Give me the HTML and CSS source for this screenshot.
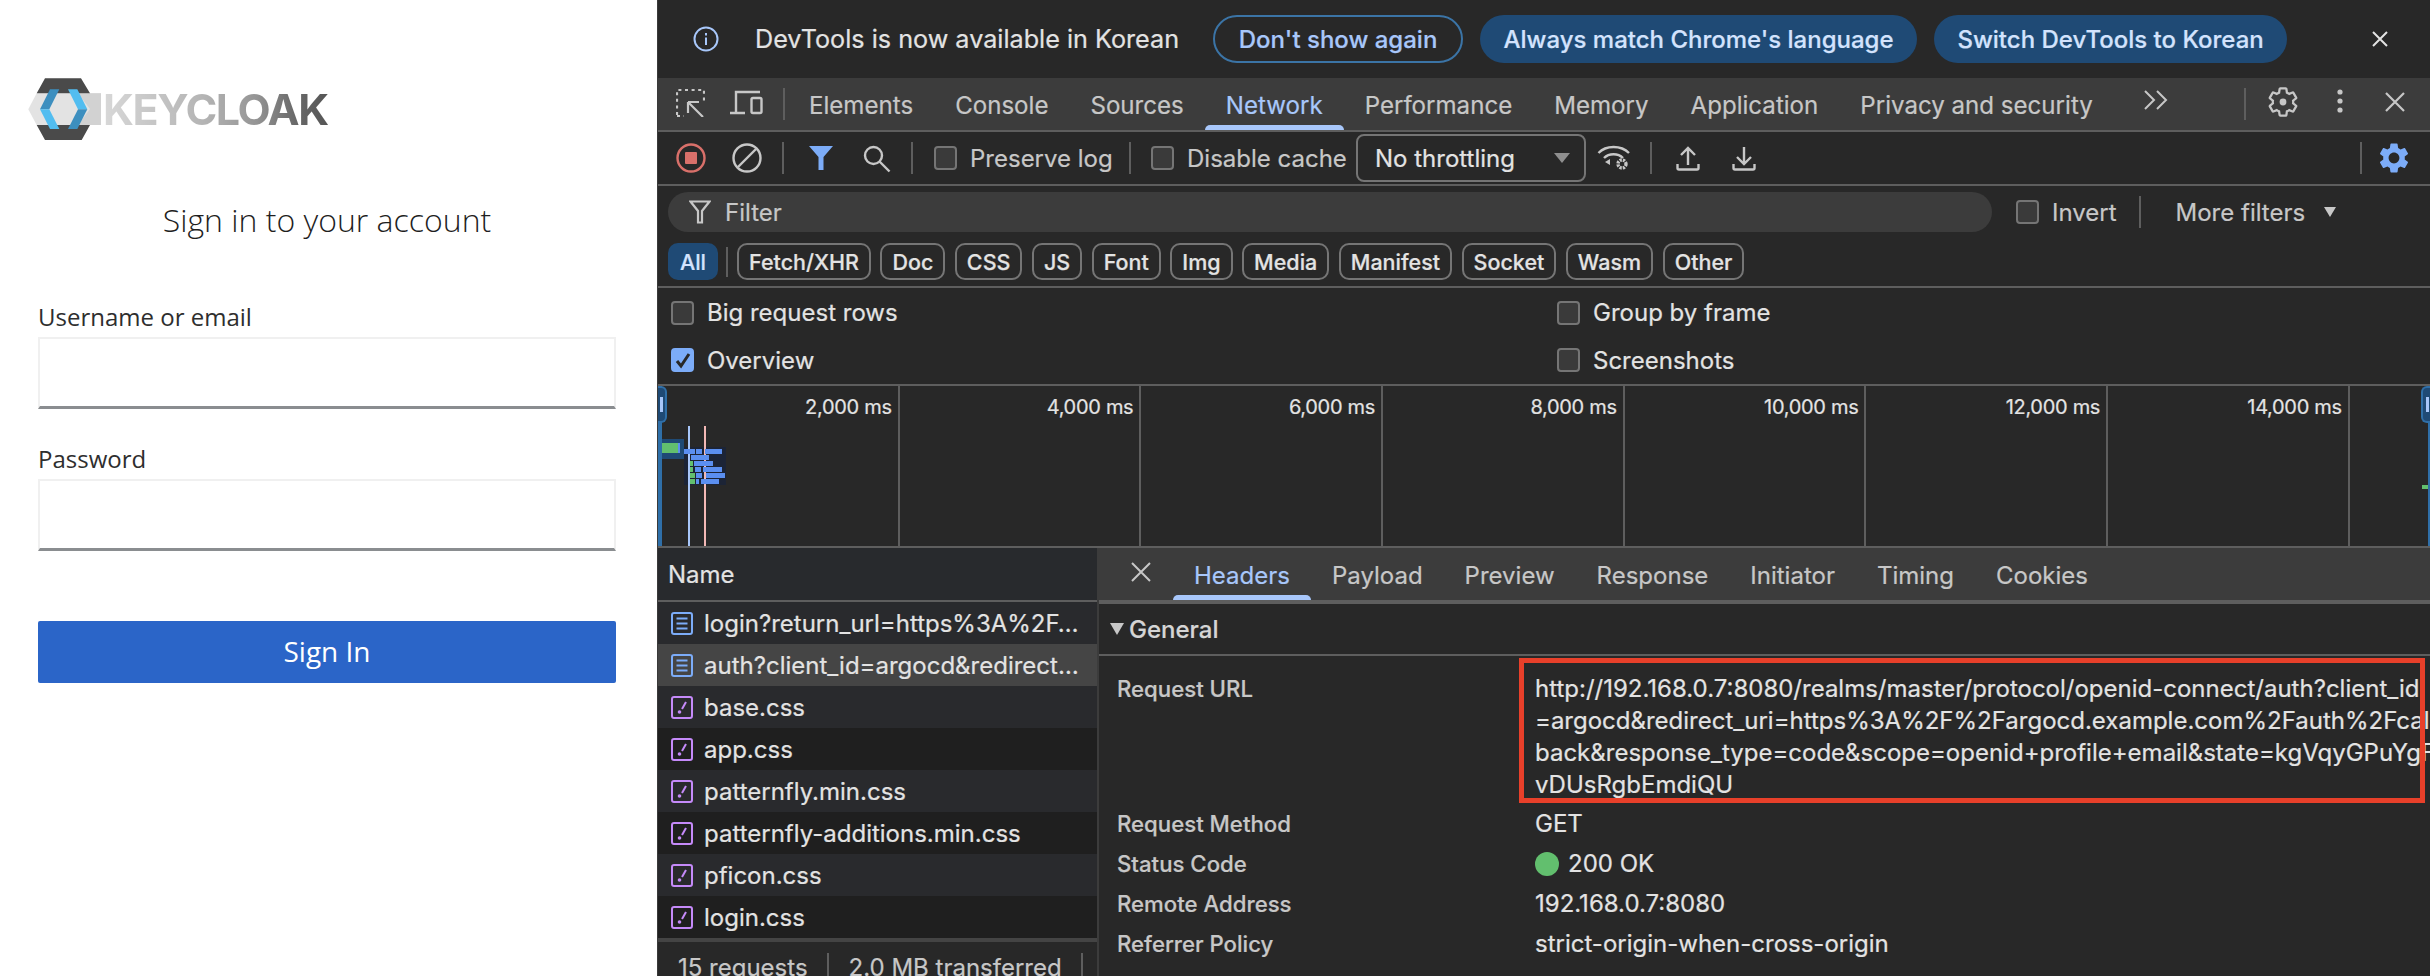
FILE: index.html
```html
<!DOCTYPE html>
<html lang="en">
<head>
<meta charset="utf-8">
<title>Keycloak sign in with DevTools</title>
<link rel="stylesheet" href="styles.css">
</head>
<body>
<div class="app">
  <main class="login">
    <div class="logo">
      <svg class="logo-mark" width="75" height="62" viewBox="0 0 75 62">
        <path fill="#e3e3e3" d="M.3 31.3 8.7 15.3H73V47H8.7z"/>
        <path fill="#d2d2d2" d="M50 15.3H73V47H50L62 31z"/>
        <path fill="#4a4a4a" d="M17 .3H53L62 15.3H8.7zM8.7 47H62L53.7 62H17z"/>
        <path fill="#3d8fbf" d="M12 31.3 22 11.3H31.3L21.3 31.3z"/>
        <path fill="#52bdf0" d="M12 31.3H21.3L31.3 51H22z"/>
        <path fill="#52bdf0" d="M59.3 31.3 49.3 11.3H40L50 31.3z"/>
        <path fill="#3d8fbf" d="M59.3 31.3H50L40 51H49.3z"/>
      </svg>
      <span class="logo-text">KEYCLOAK</span>
    </div>
    <h1 class="login-title">Sign in to your account</h1>
    <label class="field-label">Username or email</label>
    <input class="field-input" type="text">
    <label class="field-label field-label-next">Password</label>
    <input class="field-input" type="password">
    <button class="signin">Sign In</button>
  </main>

  <section class="devtools">
    <div class="infobar">
      <svg class="info-icon" width="26" height="26" viewBox="0 0 26 26" fill="none" stroke="#a8c7fa" stroke-width="2"><circle cx="13" cy="13" r="11.5"/><path d="M13 11.5v7.5M13 7v2.4"/></svg>
      <span class="info-text">DevTools is now available in Korean</span>
      <button class="pill pill-outline">Don't show again</button>
      <button class="pill pill-tonal pill-always">Always match Chrome's language</button>
      <button class="pill pill-tonal pill-switch">Switch DevTools to Korean</button>
      <svg class="info-close" width="18" height="18" viewBox="0 0 18 18" stroke="#e3e3e3" stroke-width="2"><path d="M2 2l14 14M16 2 2 16"/></svg>
    </div>

    <nav class="mainbar">
      <svg class="ic-inspect" width="29" height="28" viewBox="0 0 29 28" fill="none" stroke="#c7c7c7" stroke-width="2.2"><path stroke-dasharray="3 3.6" d="M1 26V1h27v11M1 27h7"/><path d="M12 13h11M12 13v11M12 13l15 15"/></svg>
      <svg class="ic-device" width="33" height="25" viewBox="0 0 33 25" fill="none" stroke="#c7c7c7" stroke-width="2.4"><path d="M0 23h15M6 23V2h24"/><rect x="21.5" y="8" width="10" height="15" rx="1.5"/></svg>
      <span class="vsep vsep-first"></span>
      <a class="tab">Elements</a><a class="tab">Console</a><a class="tab">Sources</a><a class="tab tab-active">Network</a><a class="tab">Performance</a><a class="tab">Memory</a><a class="tab">Application</a><a class="tab">Privacy and security</a>
      <svg class="ic-more" width="26" height="22" viewBox="0 0 26 22" fill="none" stroke="#c7c7c7" stroke-width="2"><path d="M2 2l9 9-9 9M14 2l9 9-9 9"/></svg>
      <span class="vsep vsep-end"></span>
      <svg class="ic-gear" width="34" height="34" viewBox="0 0 24 24" fill="none" stroke="#c7c7c7" stroke-width="1.6"><path d="M19.14 12.94c.04-.3.06-.61.06-.94 0-.32-.02-.64-.07-.94l2.03-1.58a.49.49 0 0 0 .12-.61l-1.92-3.32a.488.488 0 0 0-.59-.22l-2.39.96c-.5-.38-1.03-.7-1.62-.94l-.36-2.54a.484.484 0 0 0-.48-.41h-3.84c-.24 0-.43.17-.47.41l-.36 2.54c-.59.24-1.13.57-1.62.94l-2.39-.96c-.22-.08-.47 0-.59.22L2.74 8.87c-.12.21-.08.47.12.61l2.03 1.58c-.05.3-.09.63-.09.94s.02.64.07.94l-2.03 1.58a.49.49 0 0 0-.12.61l1.92 3.32c.12.22.37.29.59.22l2.39-.96c.5.38 1.03.7 1.62.94l.36 2.54c.05.24.24.41.48.41h3.84c.24 0 .44-.17.47-.41l.36-2.54c.59-.24 1.13-.56 1.62-.94l2.39.96c.22.08.47 0 .59-.22l1.92-3.32c.12-.22.07-.47-.12-.61l-2.01-1.58z"/><circle cx="12" cy="12" r="2.4" fill="#c7c7c7" stroke="none"/></svg>
      <svg class="ic-dots" width="6" height="24" viewBox="0 0 6 24" fill="#c7c7c7"><circle cx="3" cy="3" r="2.6"/><circle cx="3" cy="12" r="2.6"/><circle cx="3" cy="21" r="2.6"/></svg>
      <svg class="ic-close" width="20" height="20" viewBox="0 0 20 20" stroke="#c7c7c7" stroke-width="2.2"><path d="M1 1l18 18M19 1 1 19"/></svg>
    </nav>

    <div class="toolbar">
      <svg class="ic-record" width="30" height="30" viewBox="0 0 30 30"><circle cx="15" cy="15" r="13.5" fill="none" stroke="#d9706a" stroke-width="2.4"/><rect x="9" y="9" width="12" height="12" rx="1" fill="#d9706a"/></svg>
      <svg class="ic-clear" width="30" height="30" viewBox="0 0 30 30" fill="none" stroke="#c7c7c7" stroke-width="2.4"><circle cx="15" cy="15" r="13.5"/><path d="M6 24 24 6"/></svg>
      <span class="vsep vsep-tool1"></span>
      <svg class="ic-funnel" width="24" height="24" viewBox="0 0 24 24" fill="#7cacf8"><path d="M0 0H24L14.5 11V24H9.5V11z"/></svg>
      <svg class="ic-search" width="28" height="28" viewBox="0 0 28 28" fill="none" stroke="#c7c7c7" stroke-width="2.4"><circle cx="10.5" cy="10.5" r="8.5"/><path d="M16.5 16.5l10 10"/></svg>
      <span class="vsep vsep-tool2"></span>
      <span class="check check-preserve"></span><span class="tool-label label-preserve">Preserve log</span>
      <span class="vsep vsep-tool3"></span>
      <span class="check check-cache"></span><span class="tool-label label-cache">Disable cache</span>
      <div class="throttle"><span>No throttling</span><i class="tri"></i></div>
      <svg class="ic-wifi" width="34" height="28" viewBox="0 0 34 28" fill="none" stroke="#c7c7c7" stroke-width="2.4"><path d="M1.5 9C9 1 24 1 32 9M7 14c5-5 14-5 19 0"/><path fill="#c7c7c7" stroke="none" d="M13 15v6l-5-3z"/><circle cx="25" cy="20" r="4" stroke-width="3.4" stroke-dasharray="2.2 1"/></svg>
      <span class="vsep vsep-tool4"></span>
      <svg class="ic-load" width="24" height="25" viewBox="0 0 24 25" fill="none" stroke="#c7c7c7" stroke-width="2.4"><path d="M1.5 18v4a1.5 1.5 0 0 0 1.5 1.5h18a1.5 1.5 0 0 0 1.5-1.5v-4M12 19V2M5 9l7-7 7 7"/></svg>
      <svg class="ic-load ic-down" width="24" height="25" viewBox="0 0 24 25" fill="none" stroke="#c7c7c7" stroke-width="2.4"><path d="M1.5 18v4a1.5 1.5 0 0 0 1.5 1.5h18a1.5 1.5 0 0 0 1.5-1.5v-4M12 1v17M5 11l7 7 7-7"/></svg>
      <span class="vsep vsep-tool5"></span>
      <svg class="ic-bluegear" width="36" height="36" viewBox="0 0 24 24" fill="#7cacf8"><path d="M19.14 12.94c.04-.3.06-.61.06-.94 0-.32-.02-.64-.07-.94l2.03-1.58a.49.49 0 0 0 .12-.61l-1.92-3.32a.488.488 0 0 0-.59-.22l-2.39.96c-.5-.38-1.03-.7-1.62-.94l-.36-2.54a.484.484 0 0 0-.48-.41h-3.84c-.24 0-.43.17-.47.41l-.36 2.54c-.59.24-1.13.57-1.62.94l-2.39-.96c-.22-.08-.47 0-.59.22L2.74 8.87c-.12.21-.08.47.12.61l2.03 1.58c-.05.3-.09.63-.09.94s.02.64.07.94l-2.03 1.58a.49.49 0 0 0-.12.61l1.92 3.32c.12.22.37.29.59.22l2.39-.96c.5.38 1.03.7 1.62.94l.36 2.54c.05.24.24.41.48.41h3.84c.24 0 .44-.17.47-.41l.36-2.54c.59-.24 1.13-.56 1.62-.94l2.39.96c.22.08.47 0 .59-.22l1.92-3.32c.12-.22.07-.47-.12-.61l-2.01-1.58zM12 15.6c-1.98 0-3.6-1.62-3.6-3.6s1.62-3.6 3.6-3.6 3.6 1.62 3.6 3.6-1.62 3.6-3.6 3.6z"/></svg>
    </div>

    <div class="filters">
      <div class="filter-row">
        <div class="filter-box">
          <svg width="22" height="24" viewBox="0 0 22 24" fill="none" stroke="#c7c7c7" stroke-width="2.2"><path d="M1.5 1.5h19L13 11v11.500H9V11z"/></svg>
          <span class="filter-placeholder">Filter</span>
        </div>
        <span class="check check-invert"></span><span class="tool-label">Invert</span>
        <span class="vsep vsep-invert"></span>
        <span class="tool-label more-filters">More filters</span><i class="tri tri-more"></i>
      </div>
      <div class="chips">
        <span class="chip chip-all">All</span><span class="vsep vsep-chip"></span><span class="chip">Fetch/XHR</span><span class="chip">Doc</span><span class="chip">CSS</span><span class="chip">JS</span><span class="chip">Font</span><span class="chip">Img</span><span class="chip">Media</span><span class="chip">Manifest</span><span class="chip">Socket</span><span class="chip">Wasm</span><span class="chip">Other</span>
      </div>
    </div>

    <div class="options">
      <div class="opt"><span class="check"></span><span class="opt-label">Big request rows</span></div>
      <div class="opt"><span class="check"></span><span class="opt-label">Group by frame</span></div>
      <div class="opt"><span class="check check-on"><svg width="24" height="24" viewBox="0 0 24 24" fill="none" stroke="#282828" stroke-width="3"><path d="M6 13l4 5 8-12"/></svg></span><span class="opt-label">Overview</span></div>
      <div class="opt"><span class="check"></span><span class="opt-label">Screenshots</span></div>
    </div>

    <div class="overview">
      <div class="tick">2,000 ms</div><div class="tick">4,000 ms</div><div class="tick">6,000 ms</div><div class="tick">8,000 ms</div><div class="tick">10,000 ms</div><div class="tick">12,000 ms</div><div class="tick">14,000 ms</div><div></div>
      <svg class="ov-canvas" width="100" height="160" viewBox="658 386 100 160">
        <rect x="658" y="386" width="4" height="160" fill="#2f6fa8"/>
        <rect x="662" y="439" width="22" height="20" fill="#1f4a75"/>
        <rect x="662" y="443" width="16" height="10" fill="#62bf6e"/>
        <rect x="678" y="443" width="2" height="10" fill="#5b8ff0"/>
        <rect x="684" y="447" width="42" height="38" fill="#1c2436"/>
        <rect x="688" y="426" width="2" height="120" fill="#a8c7fa"/>
        <rect x="704" y="426" width="2" height="120" fill="#f2b8b5"/>
        <g fill="#5b8ff0">
          <rect x="684" y="449" width="11" height="5"/><rect x="696" y="449" width="6" height="5"/><rect x="705" y="449" width="17" height="5"/>
          <rect x="691" y="455" width="18" height="5"/>
          <rect x="694" y="461" width="19" height="5"/>
          <rect x="695" y="467" width="6" height="5"/><rect x="703" y="467" width="19" height="5"/>
          <rect x="696" y="473" width="6" height="5"/><rect x="706" y="473" width="19" height="5"/>
          <rect x="696" y="479" width="3" height="5"/><rect x="701" y="479" width="18" height="5"/>
        </g>
        <g fill="#62bf6e">
          <rect x="690" y="461" width="3" height="5"/><rect x="690" y="467" width="3" height="5"/><rect x="690" y="473" width="5" height="5"/><rect x="690" y="479" width="5" height="5"/>
        </g>
      </svg>
      <span class="handle handle-left"><i></i></span>
      <span class="ov-right"></span>
      <span class="ov-green"></span>
      <span class="handle handle-right"><i></i></span>
    </div>

    <div class="split">
      <aside class="requests">
        <div class="req-head">Name</div>
        <ul class="req-list">
          <li class="req"><svg class="req-ic" width="22" height="23" viewBox="0 0 22 23" fill="none" stroke="#7cacf8" stroke-width="2"><rect x="1" y="1" width="20" height="21" rx="2"/><path d="M5.500 6.500h11M5.500 11.500h11M5.500 16.500h11"/></svg>login?return_url=https%3A%2F…</li>
          <li class="req req-selected"><svg class="req-ic" width="22" height="23" viewBox="0 0 22 23" fill="none" stroke="#7cacf8" stroke-width="2"><rect x="1" y="1" width="20" height="21" rx="2"/><path d="M5.500 6.500h11M5.500 11.500h11M5.500 16.500h11"/></svg>auth?client_id=argocd&amp;redirect…</li>
          <li class="req"><svg class="req-ic" width="22" height="23" viewBox="0 0 22 23" fill="none" stroke="#c58af9" stroke-width="2"><rect x="1" y="1" width="20" height="21" rx="2"/><path d="M15 6l-4 7"/><circle cx="8.500" cy="16" r="1.800" fill="#c58af9" stroke="none"/></svg>base.css</li>
          <li class="req req-dark"><svg class="req-ic" width="22" height="23" viewBox="0 0 22 23" fill="none" stroke="#c58af9" stroke-width="2"><rect x="1" y="1" width="20" height="21" rx="2"/><path d="M15 6l-4 7"/><circle cx="8.500" cy="16" r="1.800" fill="#c58af9" stroke="none"/></svg>app.css</li>
          <li class="req"><svg class="req-ic" width="22" height="23" viewBox="0 0 22 23" fill="none" stroke="#c58af9" stroke-width="2"><rect x="1" y="1" width="20" height="21" rx="2"/><path d="M15 6l-4 7"/><circle cx="8.500" cy="16" r="1.800" fill="#c58af9" stroke="none"/></svg>patternfly.min.css</li>
          <li class="req req-dark"><svg class="req-ic" width="22" height="23" viewBox="0 0 22 23" fill="none" stroke="#c58af9" stroke-width="2"><rect x="1" y="1" width="20" height="21" rx="2"/><path d="M15 6l-4 7"/><circle cx="8.500" cy="16" r="1.800" fill="#c58af9" stroke="none"/></svg>patternfly-additions.min.css</li>
          <li class="req"><svg class="req-ic" width="22" height="23" viewBox="0 0 22 23" fill="none" stroke="#c58af9" stroke-width="2"><rect x="1" y="1" width="20" height="21" rx="2"/><path d="M15 6l-4 7"/><circle cx="8.500" cy="16" r="1.800" fill="#c58af9" stroke="none"/></svg>pficon.css</li>
          <li class="req req-dark"><svg class="req-ic" width="22" height="23" viewBox="0 0 22 23" fill="none" stroke="#c58af9" stroke-width="2"><rect x="1" y="1" width="20" height="21" rx="2"/><path d="M15 6l-4 7"/><circle cx="8.500" cy="16" r="1.800" fill="#c58af9" stroke="none"/></svg>login.css</li>
        </ul>
        <div class="req-foot"><span class="foot-cell">15 requests</span><span class="foot-cell">2.0 MB transferred</span></div>
      </aside>

      <div class="detail">
        <nav class="detail-tabs">
          <svg class="detail-close" width="20" height="20" viewBox="0 0 20 20" stroke="#c7c7c7" stroke-width="2"><path d="M1 1l18 18M19 1 1 19"/></svg>
          <a class="tab tab-active tab-first">Headers</a><a class="tab">Payload</a><a class="tab">Preview</a><a class="tab">Response</a><a class="tab">Initiator</a><a class="tab">Timing</a><a class="tab">Cookies</a>
        </nav>
        <div class="section-head"><i class="tri tri-general"></i>General</div>
        <div class="headers">
          <div class="h-name h-name-url">Request URL</div>
          <div class="h-url">
            <div>http://192.168.0.7:8080/realms/master/protocol/openid-connect/auth?client_id</div>
            <div>=argocd&amp;redirect_uri=https%3A%2F%2Fargocd.example.com%2Fauth%2Fcall</div>
            <div>back&amp;response_type=code&amp;scope=openid+profile+email&amp;state=kgVqyGPuYgF</div>
            <div>vDUsRgbEmdiQU</div>
          </div>
          <div class="h-name">Request Method</div><div class="h-val">GET</div>
          <div class="h-name">Status Code</div><div class="h-val"><i class="dot"></i>200 OK</div>
          <div class="h-name">Remote Address</div><div class="h-val">192.168.0.7:8080</div>
          <div class="h-name">Referrer Policy</div><div class="h-val">strict-origin-when-cross-origin</div>
          <div class="redbox"></div>
        </div>
      </div>
    </div>
  </section>
</div>
</body>
</html>
```

FILE: styles.css
```css
* { box-sizing: border-box; }
html, body { margin: 0; padding: 0; background: #fff; }
.app { display: flex; width: 2430px; height: 976px; overflow: hidden; }

/* Login */
.login { width: 657px; flex: none; padding: 78px 41px 0 38px; background: #fff; display: flex; flex-direction: column; font-family: "Open Sans", sans-serif; color: #2e2e2e; }
.logo { display: flex; align-items: center; height: 62px; margin-left: -10px; }
.logo-mark { flex: none; }
.logo-text { font: 700 43px/1 Inter, sans-serif; letter-spacing: -1.4px; background: linear-gradient(90deg, #d8d8d8 0%, #b4b4b4 45%, #959595 68%, #6a6a6a 85%, #555 100%); -webkit-background-clip: text; background-clip: text; color: transparent; }
.login-title { margin: 58px 0 0; font-weight: 300; font-size: 32px; line-height: 44px; text-align: center; color: #1f1f1f; }
.field-label { margin-top: 59px; font-size: 24px; line-height: 32px; height: 32px; }
.field-label-next { margin-top: 34px; }
.field-input { display: block; width: 578px; height: 72px; margin-top: 4px; padding: 0; background: #fff; border: 2px solid #f0f0f0; border-bottom: 3px solid #8a8d90; outline: 0; flex: none; }
.signin { width: 578px; height: 62px; margin-top: 70px; padding: 0 0 3px; border: 0; border-radius: 2px; background: #2b65c8; color: #fff; font: 400 28px "Open Sans", sans-serif; flex: none; }

/* DevTools */
.devtools { flex: 1; min-width: 0; display: flex; flex-direction: column; background: #282828; font-family: Inter, sans-serif; font-size: 24px; color: #e3e3e3; border-left: 1px solid #3a3a3a; -webkit-text-stroke: .2px; }
.vsep { flex: none; display: block; width: 2px; height: 32px; background: #5e5e5e; }
svg { flex: none; display: block; }

.infobar { height: 78px; display: flex; align-items: center; padding-left: 35px; flex: none; }
.info-text { margin-left: 36px; white-space: nowrap; font-size: 25.2px; }
.pill { height: 48px; padding: 0; border-radius: 24px; font: 500 24px Inter, sans-serif; white-space: nowrap; }
.pill-outline { width: 250px; margin-left: 34px; background: transparent; border: 2px solid #3b74a6; color: #a8c7fa; }
.pill-tonal { background: #1f4a75; border: 0; color: #d3e3fd; }
.pill-always { width: 437px; margin-left: 17px; }
.pill-switch { width: 353px; margin-left: 17px; }
.info-close { margin-left: 84px; }

.mainbar { height: 54px; flex: none; display: flex; align-items: center; background: #3c3c3c; border-bottom: 2px solid #5e5e5e; padding-left: 18px; }
.ic-inspect { margin-bottom: 3px; }
.ic-device { margin-left: 25px; margin-bottom: 3px; }
.vsep-first { margin-left: 20px; margin-right: 3px; }
.tab { position: relative; display: flex; align-items: center; height: 100%; padding: 3px 21px 0; color: #c7c7c7; font-size: 24.1px; white-space: nowrap; }
.tab-active { color: #a8c7fa; }
.tab-active::after { content: ""; position: absolute; left: 0; right: 0; bottom: 0; height: 5px; border-radius: 5px 5px 0 0; background: #a8c7fa; }
.ic-more { margin-left: 29px; margin-bottom: 8px; }
.vsep-end { margin-left: 75px; }
.ic-gear { margin-left: 20px; margin-bottom: 4px; }
.ic-dots { margin-left: 37px; margin-bottom: 6px; }
.ic-close { margin-left: 42px; margin-bottom: 4px; }

.toolbar { height: 54px; flex: none; display: flex; align-items: center; padding-left: 18px; border-bottom: 2px solid #5e5e5e; }
.ic-clear { margin-left: 26px; }
.vsep-tool1 { margin-left: 20px; }
.ic-funnel { margin-left: 25px; }
.ic-search { margin-left: 30px; margin-top: 2px; }
.vsep-tool2 { margin-left: 20px; }
.check { flex: none; display: block; width: 23px; height: 24px; border: 2px solid #757575; border-radius: 4px; background: #3a3a3a; }
.check-preserve { margin-left: 21px; }
.tool-label { margin-left: 13px; color: #c7c7c7; white-space: nowrap; }
.label-preserve { width: 139px; }
.label-cache { width: 157px; }
.vsep-tool3 { margin-left: 20px; }
.check-cache { margin-left: 20px; }
.throttle { display: flex; align-items: center; justify-content: space-between; width: 230px; height: 48px; margin-left: 12px; padding: 0 14px 0 17px; border: 2px solid #757575; border-radius: 8px; color: #e3e3e3; white-space: nowrap; }
.tri { flex: none; display: block; width: 0; height: 0; border-left: 8px solid transparent; border-right: 8px solid transparent; border-top: 10px solid #8f8f8f; }
.ic-wifi { margin-left: 11px; }
.vsep-tool4 { margin-left: 19px; }
.ic-load { margin-left: 24px; }
.ic-down { margin-left: 32px; }
.vsep-tool5 { margin-left: 604px; }
.ic-bluegear { margin-left: 14px; }

.filters { height: 102px; flex: none; border-bottom: 2px solid #5e5e5e; padding: 6px 0 0 10px; display: flex; flex-direction: column; }
.filter-row { display: flex; align-items: center; height: 40px; flex: none; }
.filter-box { display: flex; align-items: center; width: 1324px; height: 40px; border-radius: 20px; background: #3c3c3c; padding-left: 21px; }
.filter-placeholder { margin-left: 14px; color: #c7c7c7; }
.check-invert { margin-left: 24px; }
.vsep-invert { margin-left: 22px; }
.more-filters { margin-left: 35px; }
.tri-more { margin-left: 19px; border-left-width: 6px; border-right-width: 6px; border-top-color: #c7c7c7; }
.chips { display: flex; align-items: center; gap: 9.5px; margin-top: 11px; height: 37px; flex: none; }
.chip { display: block; height: 37px; line-height: 34px; padding: 0 10px; border: 2px solid #757575; border-radius: 10px; font-size: 21.5px; font-weight: 500; color: #e3e3e3; white-space: nowrap; }
.chip-all { width: 50px; padding: 0; text-align: center; background: #1f4a75; border: 0; line-height: 38px; color: #d3e3fd; }
.vsep-chip { height: 30px; margin: 0 -.5px 0 -1.5px; }

.options { height: 98px; flex: none; display: grid; grid-template-columns: 886px 1fr; grid-auto-rows: 47.5px; padding: 1px 0 0 13px; border-bottom: 2px solid #5e5e5e; }
.opt { display: flex; align-items: center; }
.opt-label { margin-left: 13px; color: #e3e3e3; }
.check-on { position: relative; background: #7cacf8; border-color: #7cacf8; }
.check-on svg { position: absolute; left: -2px; top: -2px; }

.overview { position: relative; height: 162px; flex: none; display: grid; grid-template-columns: repeat(7, 241.7px) 1fr; border-bottom: 2px solid #5e5e5e; }
.tick { border-right: 2px solid #5e5e5e; text-align: right; padding: 8px 6px 0 0; font-size: 20px; letter-spacing: -.3px; line-height: 26px; color: #e3e3e3; }
.ov-canvas { position: absolute; left: 0; top: 0; }
.handle { position: absolute; top: 0; width: 9px; height: 37px; background: #1f4a75; border: 2px solid #2f6fa8; }
.handle i { position: absolute; top: 9px; left: 2px; width: 3px; height: 15px; background: #a8c7fa; }
.handle-left { left: 0; border-left: 0; border-radius: 0 6px 6px 0; }
.handle-right { right: 0; border-right: 0; border-radius: 6px 0 0 6px; }
.handle-right i { left: 3px; }
.ov-right { position: absolute; right: 0; top: 37px; bottom: 0; width: 2px; background: #2f6fa8; }
.ov-green { position: absolute; right: 2px; top: 99px; width: 6px; height: 4px; background: #62bf6e; }

.split { flex: 1; min-height: 0; display: flex; }
.requests { width: 441px; flex: none; display: flex; flex-direction: column; background: #282a2d; border-right: 2px solid #3c3c3c; }
.req-head { height: 54px; flex: none; display: flex; align-items: center; padding-left: 10px; border-bottom: 2px solid #5e5e5e; color: #e3e3e3; }
.req-list { list-style: none; margin: 0; padding: 0; flex: none; }
.req { display: flex; align-items: center; height: 42px; padding-left: 13px; background: #292a2d; white-space: nowrap; color: #e3e3e3; }
.req-dark { background: #1f1f1f; }
.req-selected { background: #454545; }
.req-ic { margin-right: 11px; }
.req-foot { flex: 1; display: flex; align-items: flex-start; padding-top: 11px; border-top: 4px solid #444; background: #282828; color: #c7c7c7; }
.foot-cell { display: block; height: 38px; padding: 0 19px 0 20px; border-right: 2px solid #5e5e5e; white-space: nowrap; }

.detail { flex: 1; min-width: 0; display: flex; flex-direction: column; }
.detail-tabs { height: 56px; flex: none; display: flex; align-items: center; background: #3c3c3c; border-bottom: 4px solid #5e5e5e; padding-left: 32px; }
.detail-tabs .tab { font-size: 24px; }
.detail-close { margin-right: 22px; margin-bottom: 4px; }
.section-head { height: 52px; flex: none; display: flex; align-items: center; padding-left: 11px; border-bottom: 2px solid #5e5e5e; font-weight: 500; color: #d5d5d5; }
.tri-general { margin-right: 5px; border-left-width: 7px; border-right-width: 7px; border-top: 12px solid #c7c7c7; }
.headers { position: relative; display: grid; grid-template-columns: 418px 1fr; grid-template-rows: 131px; grid-auto-rows: 40px; padding: 17px 0 0 18px; }
.h-name { color: #c7c7c7; font-weight: 500; font-size: 22.2px; line-height: 40px; white-space: nowrap; }
.h-name-url { line-height: 32px; }
.h-url { line-height: 32px; white-space: nowrap; color: #e3e3e3; }
.h-val { line-height: 40px; color: #e3e3e3; display: flex; align-items: center; white-space: nowrap; }
.dot { display: block; flex: none; width: 24px; height: 24px; border-radius: 50%; background: #62bf6e; margin-right: 9px; }
.redbox { position: absolute; left: 420px; top: 2px; width: 906px; height: 145px; border: 5px solid #e8402a; }
```
